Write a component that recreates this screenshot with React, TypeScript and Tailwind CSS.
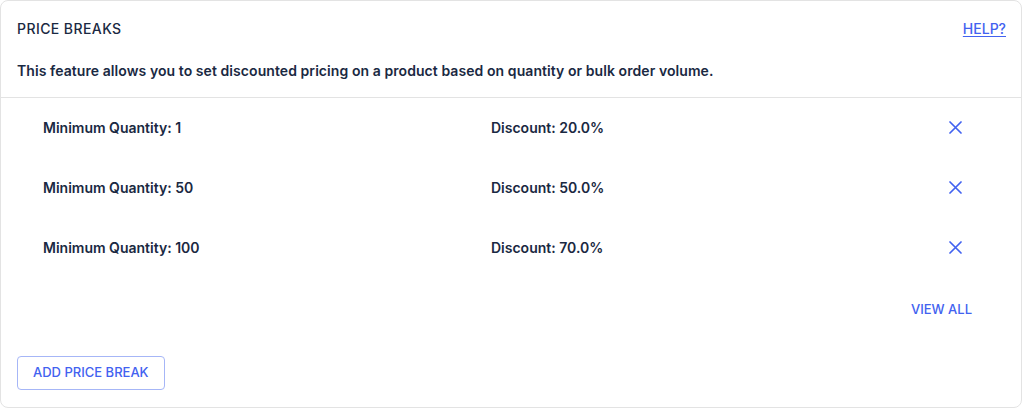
export default function App() {
  const breaks = [
    { qty: 1, discount: "20.0%" },
    { qty: 50, discount: "50.0%" },
    { qty: 100, discount: "70.0%" },
  ];

  return (
    <div className="w-[1024px] h-[409px] bg-white font-['Inter',sans-serif] text-[#1a2942]">
      <div className="w-[1022px] h-[408px] rounded-lg border border-[#e3e3e3] bg-white flex flex-col">
        <div className="px-4 pt-[17px] pb-[16px] border-b border-[#e3e3e3]">
          <div className="flex items-center justify-between">
            <h2 className="text-[14px] font-medium tracking-[0.03em]">PRICE BREAKS</h2>
            <a href="#" className="text-[14px] font-medium text-[#4262f0] underline underline-offset-2 mr-[-1px]">
              HELP?
            </a>
          </div>
          <p className="mt-[21px] text-[14px] font-semibold tracking-[0.005em]">
            This feature allows you to set discounted pricing on a product based on quantity or bulk order volume.
          </p>
        </div>

        <div className="mt-[-1px]">
          {breaks.map((b) => (
            <div key={b.qty} className="h-[60px] flex items-center pl-[42px] pr-[59px]">
              <div className="w-[448px] text-[14px] font-semibold">Minimum Quantity: {b.qty}</div>
              <div className="flex-1 text-[14px] font-semibold">Discount: {b.discount}</div>
              <button className="text-[#4262f0]">
                <svg width="13" height="13" viewBox="0 0 13 13" fill="none" stroke="currentColor" strokeWidth="1.7" strokeLinecap="round">
                  <path d="M1 1l11 11M12 1L1 12" />
                </svg>
              </button>
            </div>
          ))}
        </div>

        <div className="flex justify-end pr-[49px] mt-[23px]">
          <button className="text-[13px] font-medium text-[#4262f0]">VIEW ALL</button>
        </div>

        <div className="px-4 mt-[36px]">
          <button className="h-[34px] px-[15px] rounded border border-[#a6b6f7] text-[13px] font-medium text-[#4262f0]">
            ADD PRICE BREAK
          </button>
        </div>
      </div>
    </div>
  );
}
